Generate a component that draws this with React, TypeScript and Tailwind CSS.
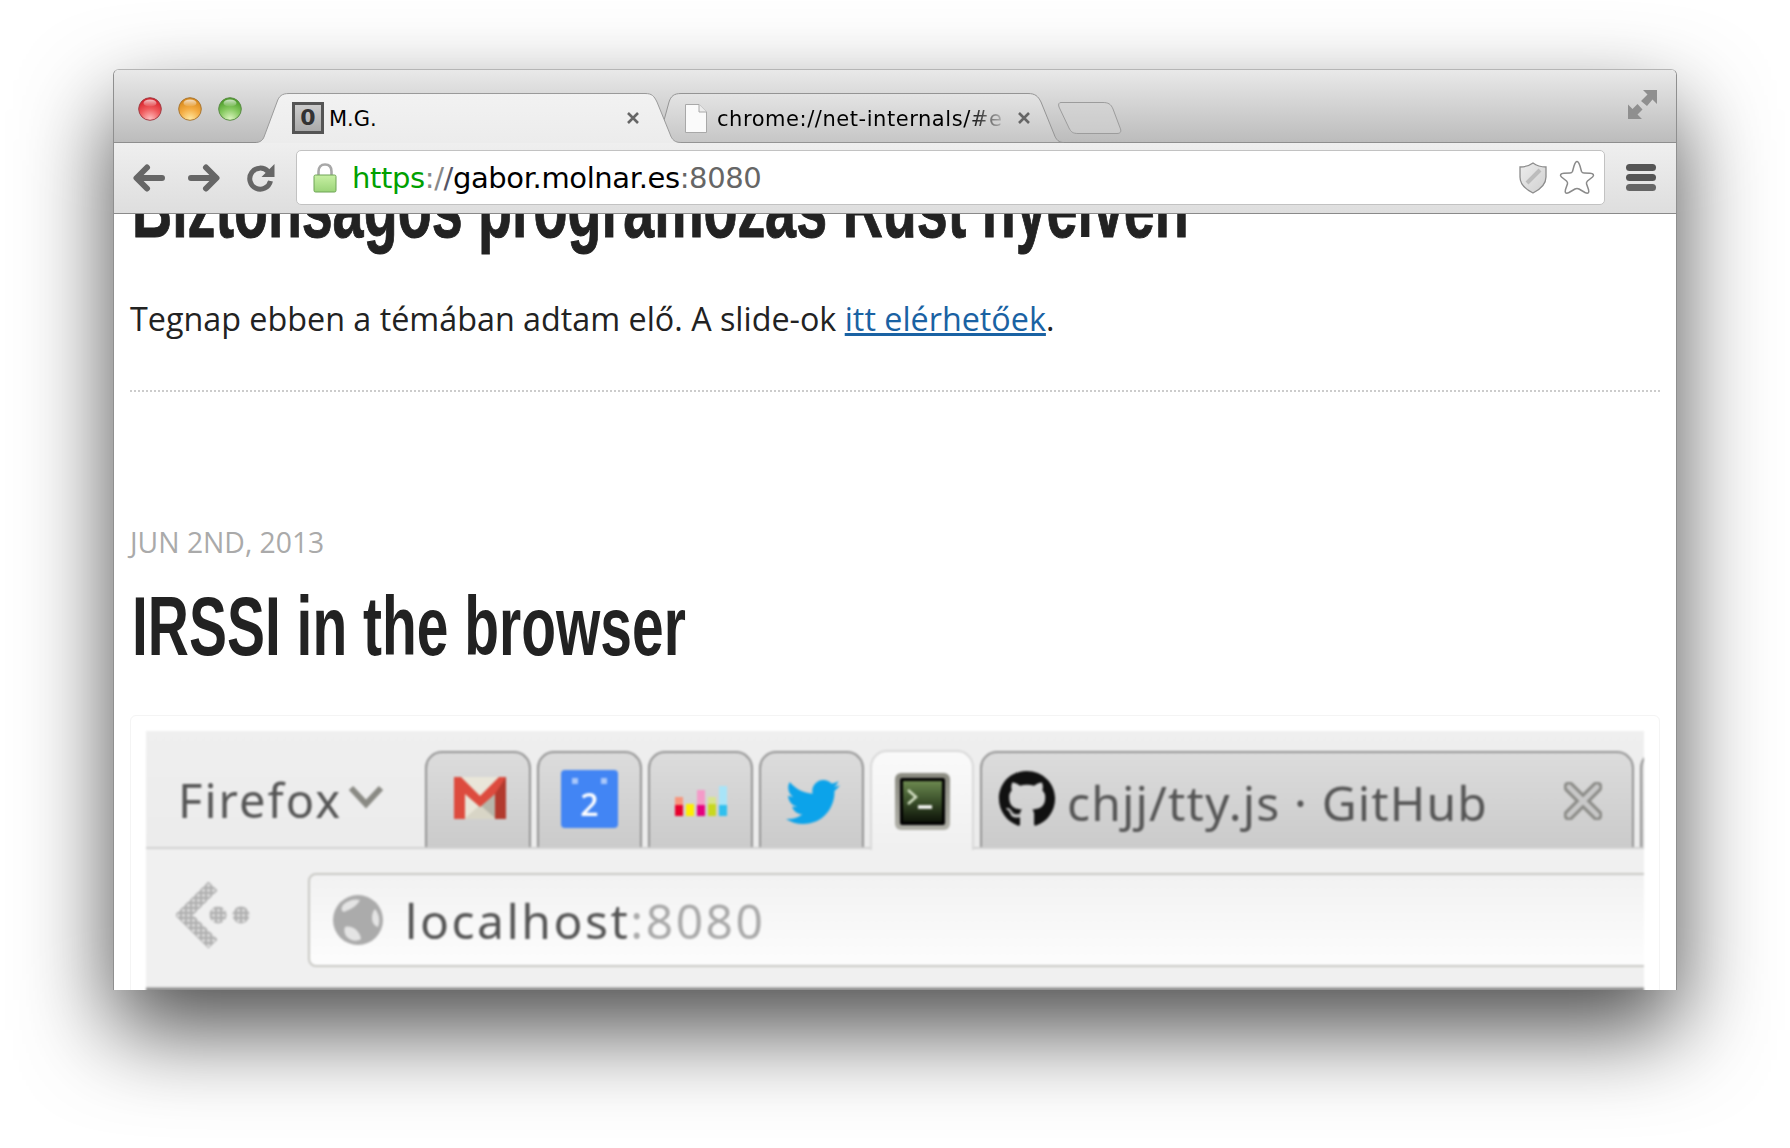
import React from "react";
import { FaTwitter, FaGithub } from "react-icons/fa";

const TrafficLight = ({ id, c1, c2, c3, rim }: { id: string; c1: string; c2: string; c3: string; rim: string }) => (
  <svg width="24" height="24" viewBox="0 0 24 24">
    <defs>
      <radialGradient id={id} cx="50%" cy="95%" r="85%">
        <stop offset="0%" stopColor={c3} />
        <stop offset="55%" stopColor={c2} />
        <stop offset="100%" stopColor={c1} />
      </radialGradient>
      <linearGradient id={id + "h"} x1="0" y1="0" x2="0" y2="1">
        <stop offset="0%" stopColor="#fff" stopOpacity="0.75" />
        <stop offset="100%" stopColor="#fff" stopOpacity="0.05" />
      </linearGradient>
    </defs>
    <circle cx="12" cy="12" r="11.300" fill={`url(#${id})`} stroke={rim} strokeWidth="1" />
    <ellipse cx="12" cy="6" rx="6.500" ry="3.600" fill={`url(#${id}h)`} />
  </svg>
);

const TabClose = () => (
  <svg width="14" height="14" viewBox="0 0 14 14" className="shrink-0">
    <path d="M2 2L12 12M12 2L2 12" stroke="#666" strokeWidth="2.600" />
  </svg>
);

const ChromeTabs = () => (
  <div className="flex h-[73px] shrink-0 items-end border-b border-[#8e8e8e] bg-gradient-to-b from-[#e9e9e9] to-[#bcbcbc] pl-[24px]">
    <div className="mb-[21px] flex gap-[16px]">
      <TrafficLight id="tlr" c1="#d8242c" c2="#ef5a5c" c3="#ffc0c0" rim="#a04048" />
      <TrafficLight id="tly" c1="#d98a1c" c2="#f4ac42" c3="#ffe8a0" rim="#a87838" />
      <TrafficLight id="tlg" c1="#4f9e2c" c2="#86c960" c3="#dcf5c0" rim="#5c8c48" />
    </div>
    <div className="relative z-10 -mb-px ml-[14px] flex h-[50px] w-[425px] items-center pl-[36px] pr-[41px]">
      <svg width="425" height="50" viewBox="0 0 425 50" className="absolute left-0 top-0">
        <defs>
          <linearGradient id="activeTab" x1="0" y1="0" x2="0" y2="1">
            <stop offset="0%" stopColor="#f2f2f2" />
            <stop offset="100%" stopColor="#ececec" />
          </linearGradient>
        </defs>
        <path d="M0 49.500C4 49.500 7 47 8 44L21 9C23 3 26 .5 33 .5H389C396 .5 398 3 401 9L414 41C416 47 419 49.500 425 49.500V50H0Z" fill="url(#activeTab)" />
        <path d="M0 49.500C4 49.500 7 47 8 44L21 9C23 3 26 .5 33 .5H389C396 .5 398 3 401 9L414 41C416 47 419 49.500 425 49.500" fill="none" stroke="#9a9a9a" />
      </svg>
      <div className="relative flex h-[32px] w-[32px] shrink-0 items-center justify-center border-[3px] border-[#555] bg-gradient-to-b from-[#ccc] to-[#aaa] font-['DejaVu_Sans',sans-serif] text-[22px] font-bold leading-none text-[#333]">
        0
      </div>
      <span className="relative ml-[5px] mt-[3px] font-['DejaVu_Sans',sans-serif] text-[21px] text-black">M.G.</span>
      <span className="relative ml-auto flex">
        <TabClose />
      </span>
    </div>
    <div className="relative -mb-px -ml-[23px] flex h-[50px] w-[406px] items-center pl-[27px] pr-[33px]">
      <svg width="406" height="50" viewBox="0 0 406 50" className="absolute left-0 top-0">
        <defs>
          <linearGradient id="otherTab" x1="0" y1="0" x2="0" y2="1">
            <stop offset="0%" stopColor="#e4e4e4" />
            <stop offset="100%" stopColor="#c6c6c6" />
          </linearGradient>
        </defs>
        <path d="M0 49.500L11 9C13 3 16 .5 23 .5H370C377 .5 380 3 383 9L396 41C398 47 401 49.500 406 49.500Z" fill="url(#otherTab)" stroke="#949494" />
      </svg>
      <svg width="22" height="29" viewBox="0 0 22 29" className="relative shrink-0">
        <path d="M.5.5H14L21.500 8V28.500H.5Z" fill="#fafafa" stroke="#a8a8a8" />
        <path d="M14 .5V8H21.500" fill="#ececec" stroke="#a8a8a8" />
      </svg>
      <span className="relative ml-[10px] mt-[3px] w-[292px] overflow-hidden whitespace-nowrap font-['DejaVu_Sans',sans-serif] text-[21px] tracking-[0.55px] text-black [mask-image:linear-gradient(to_right,black_86%,transparent_100%)]">
        chrome://net-internals/#e
      </span>
      <span className="relative ml-auto flex">
        <TabClose />
      </span>
    </div>
    <svg width="65" height="32" viewBox="0 0 65 32" className="-ml-[6px] mb-[8px] shrink-0">
      <path d="M3 .5H45C50 .5 53 2 55 7L62.500 27C63.500 30 62 31.500 59 31.500H20C15 31.500 13 30 11 26L1 5C0 2 1 .5 3 .5Z" fill="#d4d4d4" fillOpacity="0.55" stroke="#9c9c9c" />
    </svg>
    <svg width="29" height="29" viewBox="0 0 29 29" className="mb-[23px] ml-auto mr-[19px] shrink-0">
      <path d="M29 0V14L24.500 9.500L19 16L13 11L19.500 4.500L15 0Z" fill="#8f8f8f" />
      <path d="M0 29V14.500L4.500 19L9.500 14L14.500 19.500L9.500 24.500L14 29Z" fill="#8f8f8f" />
    </svg>
  </div>
);

const Lock = () => (
  <svg width="24" height="30" viewBox="0 0 24 30" className="shrink-0">
    <defs>
      <linearGradient id="lockBody" x1="0" y1="0" x2="0" y2="1">
        <stop offset="0%" stopColor="#c8f0a4" />
        <stop offset="100%" stopColor="#9bd479" />
      </linearGradient>
    </defs>
    <path d="M5.500 13V8.500C5.500 4 8 1.500 12 1.500S18.500 4 18.500 8.500V13" fill="none" stroke="#a8a8a8" strokeWidth="2.600" />
    <rect x="1" y="12" width="22" height="17" rx="1.500" fill="url(#lockBody)" stroke="#6fa456" />
  </svg>
);

const ChromeToolbar = () => (
  <div className="flex h-[71px] shrink-0 items-center border-b border-[#8a8a8a] bg-gradient-to-b from-[#efefef] to-[#dedede] pb-[1px] pl-[19px]">
    <svg width="32" height="28" viewBox="0 0 32 28" className="shrink-0">
      <path d="M29 14H6M14 3.500L3.500 14L14 24.500" fill="none" stroke="#666" strokeWidth="6" strokeLinecap="round" strokeLinejoin="round" />
    </svg>
    <svg width="32" height="28" viewBox="0 0 32 28" className="ml-[23px] shrink-0">
      <path d="M3 14H26M18 3.500L28.500 14L18 24.500" fill="none" stroke="#666" strokeWidth="6" strokeLinecap="round" strokeLinejoin="round" />
    </svg>
    <svg width="28" height="29" viewBox="0 0 28 29" className="ml-[27px] shrink-0">
      <path d="M21 8.500A10.500 10.500 0 1 0 23.500 18" fill="none" stroke="#666" strokeWidth="5" />
      <path d="M27.500 1V14H14.500Z" fill="#666" />
    </svg>
    <div className="ml-[21px] flex h-[55px] w-[1309px] shrink-0 items-center rounded-[5px] border border-[#c2c2c2] bg-white pl-[16px] pr-[9px]">
      <Lock />
      <span className="ml-[15px] mt-[3px] whitespace-nowrap font-['DejaVu_Sans',sans-serif] text-[29px] tracking-[-0.38px]">
        <span className="text-[#00a000]">https</span>
        <span className="text-[#888]">:/</span>
        <span className="text-[#556]">/</span>
        <span className="text-black">gabor.molnar.es</span>
        <span className="text-[#666]">:8080</span>
      </span>
      <svg width="28" height="32" viewBox="0 0 28 32" className="ml-auto shrink-0">
        <defs>
          <linearGradient id="shield" x1="0" y1="0" x2="1" y2="1">
            <stop offset="0%" stopColor="#eee" />
            <stop offset="100%" stopColor="#cfcfcf" />
          </linearGradient>
        </defs>
        <path d="M14 1C18 4 23 5 27 5V15C27 23 20 28 14 31C8 28 1 23 1 15V5C5 5 10 4 14 1Z" fill="url(#shield)" stroke="#8c8c8c" strokeWidth="1.300" />
        <path d="M8 21L21 8" stroke="#bcbcbc" strokeWidth="4" />
      </svg>
      <svg width="36" height="35" viewBox="0 0 36 35" className="ml-[12px] shrink-0">
        <path d="M18 1.500C19.500 1.500 20 3 21 6L22.500 11.500C23 12.500 23.500 13 25 13L31 13.200C34.500 13.500 35.500 15 33.500 17L28.500 21C27.500 22 27.200 22.500 27.500 23.800L29.500 29.500C30.500 33 29 34 26 32.500L20 29C18.700 28.300 17.300 28.300 16 29L10 32.500C7 34 5.500 33 6.500 29.500L8.500 23.800C8.800 22.500 8.500 22 7.500 21L2.500 17C.5 15 1.500 13.500 5 13.200L11 13C12.500 13 13 12.500 13.500 11.500L15 6C16 3 16.500 1.500 18 1.500Z" fill="#fff" stroke="#8a8a8a" strokeWidth="1.500" />
      </svg>
    </div>
    <div className="ml-[21px] flex w-[30px] shrink-0 flex-col gap-[3px]">
      <div className="h-[7px] rounded-full bg-[#555]" />
      <div className="h-[7px] rounded-full bg-[#555]" />
      <div className="h-[7px] rounded-full bg-[#666]" />
    </div>
  </div>
);

const InnerTab = ({ active, w, children }: { active?: boolean; w: string; children?: React.ReactNode }) => (
  <div
    className={`flex shrink-0 items-start rounded-t-[17px] border-2 border-b-0 ${w} ${
      active
        ? "h-[100px] border-[#d8d8d8] bg-gradient-to-b from-[#fafafa] to-[#f0f0f0] -mb-[3px]"
        : "h-[96px] border-[#949494] bg-gradient-to-b from-[#dcdcdc] to-[#cbcbcb]"
    }`}
  >
    {children}
  </div>
);

const Gmail = () => (
  <svg width="52" height="42" viewBox="0 0 52 42" className="ml-[27px] mt-[24px]">
    <rect width="52" height="42" fill="#e9e6d9" />
    <path d="M10 42L26 28L42 42Z" fill="#d8d5c6" />
    <path d="M26 28L42 14V42Z" fill="#b7b6aa" />
    <path d="M0 0H7L26 19L45 0H52V42H41V17L26 30L11 17V42H0Z" fill="#dd4b3e" />
    <path d="M41 17L52 0V42H41Z" fill="#b23a2e" />
  </svg>
);

const Calendar = () => (
  <div className="relative ml-[22px] mt-[17px] flex h-[58px] w-[57px] items-end justify-center rounded-[4px] bg-[#4285f4] pb-[5px] font-['Open_Sans',sans-serif] text-[32px] font-semibold leading-[38px] text-white">
    <div className="absolute left-[11px] top-[8px] h-[6px] w-[6px] bg-[#a9c7fa]" />
    <div className="absolute right-[11px] top-[8px] h-[6px] w-[6px] bg-[#a9c7fa]" />
    2
  </div>
);

const bars: { top: string; bottom: string; h: string; b: string }[] = [
  { top: "bg-[#f8957c]", bottom: "bg-[#e8002c]", h: "h-[8px]", b: "h-[11px]" },
  { top: "bg-transparent", bottom: "bg-[#ffee00]", h: "h-[0px]", b: "h-[12px]" },
  { top: "bg-[#f49ac8]", bottom: "bg-[#e6007e]", h: "h-[15px]", b: "h-[11px]" },
  { top: "bg-[#d8e48c]", bottom: "bg-[#c8d820]", h: "h-[7px]", b: "h-[12px]" },
  { top: "bg-[#a8e4f8]", bottom: "bg-[#30c0ee]", h: "h-[19px]", b: "h-[11px]" },
];

const Bars = () => (
  <div className="ml-[25px] mt-[32px] flex h-[31px] items-end gap-[3px]">
    {bars.map((b, i) => (
      <div key={i} className="w-[8px]">
        <div className={`${b.h} ${b.top}`} />
        <div className={`${b.b} ${b.bottom}`} />
      </div>
    ))}
  </div>
);

const Terminal = () => (
  <div className="ml-[23px] mt-[21px] h-[57px] w-[55px] rounded-[6px] bg-gradient-to-b from-[#8a8a80] to-[#b0b0a8] p-[5px]">
    <div className="h-full w-full rounded-[2px] bg-black p-[3px]">
      <div className="relative h-full w-full bg-gradient-to-b from-[#6d8a50] via-[#3a4f2a] to-[#0e1409]">
        <svg width="30" height="30" viewBox="0 0 30 30" className="absolute left-[3px] top-[5px]">
          <path d="M2 4L10 11L2 18" fill="none" stroke="#d8e4c8" strokeWidth="2.500" />
          <path d="M12 21H26" stroke="#fff" strokeWidth="3.500" />
        </svg>
      </div>
    </div>
  </div>
);

const HollowX = () => (
  <svg width="38" height="38" viewBox="0 0 38 38" className="ml-auto mr-[30px] mt-[29px] shrink-0">
    <path d="M5 5L33 33M33 5L5 33" stroke="#8c8c88" strokeWidth="11" strokeLinecap="round" />
    <path d="M5 5L33 33M33 5L5 33" stroke="#c9c9c9" strokeWidth="5" strokeLinecap="round" />
  </svg>
);

const InnerBack = () => (
  <svg width="76" height="76" viewBox="0 0 76 76" className="shrink-0">
    <defs>
      <pattern id="dots" width="5" height="5" patternUnits="userSpaceOnUse">
        <rect width="5" height="5" fill="#b0b0b0" />
        <circle cx="2.500" cy="2.500" r="1.400" fill="#e8e8e8" />
      </pattern>
    </defs>
    <path d="M37 8L8 37L37 66" fill="none" stroke="url(#dots)" strokeWidth="13" strokeLinejoin="miter" />
    <circle cx="42" cy="37" r="8.500" fill="url(#dots)" />
    <circle cx="65" cy="37" r="8.500" fill="url(#dots)" />
  </svg>
);

const Globe = () => (
  <svg width="50" height="50" viewBox="0 0 50 50" className="shrink-0">
    <circle cx="25" cy="25" r="25" fill="#ababab" />
    <path d="M10 10C16 4 24 4 27 5C24 11 18 14 11 17C8 16 8 13 10 10Z" fill="#e4e4e4" />
    <path d="M12 32C19 30 27 36 28 44C24 47 17 46 13 41C11 38 11 34 12 32Z" fill="#e4e4e4" />
    <path d="M42 14C47 20 47 27 45 32C41 31 39 27 39 23C39 19 40 16 42 14Z" fill="#e4e4e4" />
  </svg>
);

const InnerShot = () => (
  <div className="flex h-[260px] flex-col overflow-hidden bg-[#f0f0f0] blur-[0.8px]">
    <div className="flex h-[118px] shrink-0 items-end border-b-2 border-[#d2d2d2] bg-gradient-to-b from-[#efefef] to-[#ececec]">
      <div className="flex h-[100px] w-[279px] shrink-0 pl-[32px] pt-[21px]">
        <span className="font-['Noto_Sans',sans-serif] text-[47px] leading-[64px] tracking-[2px] text-[#555]">Firefox</span>
        <svg width="36" height="24" viewBox="0 0 36 24" className="ml-[6px] mt-[17px] shrink-0">
          <path d="M3 3L18 19L33 3" fill="none" stroke="#8a8a84" strokeWidth="6" />
        </svg>
      </div>
      <div className="flex items-end gap-[6px]">
        <InnerTab w="w-[106px]">
          <Gmail />
        </InnerTab>
        <InnerTab w="w-[105px]">
          <Calendar />
        </InnerTab>
        <InnerTab w="w-[105px]">
          <Bars />
        </InnerTab>
        <InnerTab w="w-[105px]">
          <FaTwitter className="ml-[25px] mt-[22px] shrink-0 text-[#0ca3ea]" size={54} />
        </InnerTab>
        <InnerTab active w="w-[104px]">
          <Terminal />
        </InnerTab>
        <InnerTab w="w-[654px]">
          <FaGithub className="ml-[16px] mt-[17px] shrink-0 text-[#111]" size={58} />
          <span className="ml-[11px] mt-[20px] whitespace-nowrap font-['Noto_Sans',sans-serif] text-[48px] leading-[60px] tracking-[1.150px] text-[#555]">chjj/tty.js · GitHub</span>
          <HollowX />
        </InnerTab>
        <InnerTab w="w-[40px]" />
      </div>
    </div>
    <div className="flex flex-1 items-start pl-[30px] pt-[24px]">
      <div className="mt-[5px] shrink-0">
        <InnerBack />
      </div>
      <div className="-mr-[100px] ml-[56px] flex h-[94px] flex-1 items-center rounded-[8px] border-2 border-[#c8c8c4] bg-gradient-to-b from-[#f2f2f2] to-[#fdfdfd] pl-[23px]">
        <Globe />
        <span className="ml-[22px] mt-[1px] font-['Noto_Sans',sans-serif] text-[48px] leading-[60px] tracking-[2.500px]">
          <span className="text-[#555]">localhost</span>
          <span className="text-[#aaa]">:8080</span>
        </span>
      </div>
    </div>
    <div className="h-[4px] shrink-0 bg-gradient-to-b from-[#c4c4c4] to-[#666]" />
  </div>
);

export default function App() {
  return (
    <div className="h-[1148px] overflow-hidden bg-white pl-[113px] pt-[69px]">
      <div className="flex h-[921px] w-[1564px] flex-col overflow-hidden rounded-t-[6px] border-x border-t border-x-[#8f8f8f] border-t-[#b5b5b5] bg-white shadow-[0_40px_90px_rgba(0,0,0,0.7)]">
        <ChromeTabs />
        <ChromeToolbar />
        <div className="min-h-0 flex-1 overflow-hidden px-[16px] font-['Open_Sans',sans-serif]">
          <h1 className="-mt-[48px] h-[84px] origin-left scale-x-[0.662] whitespace-nowrap pl-[3px] font-['Liberation_Sans',sans-serif] text-[84px] font-bold leading-[84px] text-[#222] [-webkit-text-stroke:1px_#222]">
            Biztonságos programozás Rust nyelven
          </h1>
          <p className="mt-[44px] text-[32.3px] leading-[48px] text-[#222]">
            Tegnap ebben a témában adtam elő. A slide-ok{" "}
            <a className="text-[#1a62a3] underline">itt elérhetőek</a>.
          </p>
          <hr className="mt-[48px] border-0 border-t-2 border-dotted border-[#ccc]" />
          <div className="mt-[130px] text-[28.3px] leading-[40px] text-[#aaa]">JUN 2ND, 2013</div>
          <h2 className="mt-[22px] h-[84px] origin-left scale-x-[0.678] whitespace-nowrap pl-[3px] font-['Liberation_Sans',sans-serif] text-[84px] font-bold leading-[84px] text-[#222]">
            IRSSI in the browser
          </h2>
          <div className="mt-[47px] rounded-[6px] border border-[#f4f4f4] p-[15px]">
            <InnerShot />
          </div>
        </div>
      </div>
    </div>
  );
}
